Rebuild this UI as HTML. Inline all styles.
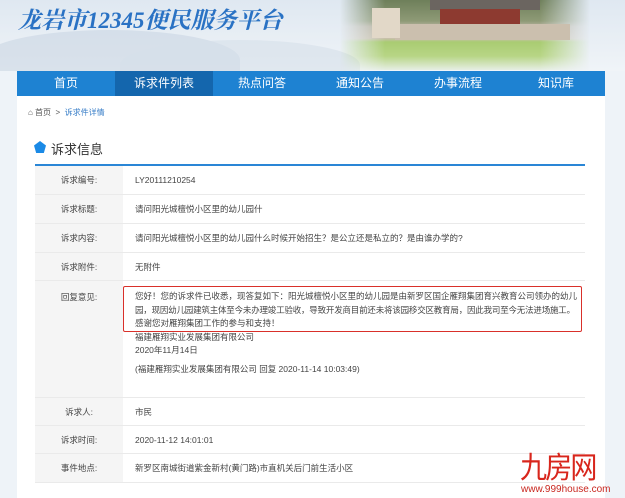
<!DOCTYPE html>
<html><head><meta charset="utf-8">
<style>
*{margin:0;padding:0;box-sizing:border-box}
body{width:625px;height:498px;overflow:hidden;background:#eef3f8;font-family:"Liberation Sans","Noto Sans CJK SC",sans-serif;position:relative}
.banner{position:absolute;left:0;top:0;width:625px;height:71px;background:linear-gradient(180deg,#dfe8f1 0%,#e9eff5 60%,#f0f4f8 100%);overflow:hidden}
.mt1{position:absolute;left:-20px;top:30px;width:260px;height:60px;background:#c9d6e2;border-radius:50% 50% 0 0;opacity:.6}
.mt2{position:absolute;left:120px;top:40px;width:240px;height:50px;background:#d5e0ea;border-radius:50% 50% 0 0;opacity:.6}
.title{position:absolute;left:18px;top:2px;font-family:"Liberation Serif","Noto Serif CJK SC",serif;font-weight:bold;font-size:23px;color:#2a72c4;font-style:italic}
.photo{position:absolute;left:340px;top:0;width:250px;height:70px;background:linear-gradient(180deg,#6e7f5a 0%,#8e9a76 30%,#b8b3a0 38%,#c8c0ab 55%,#a9cc72 60%,#b7d585 80%,#e6eee4 100%);-webkit-mask-image:linear-gradient(90deg,transparent 0,#000 18%,#000 80%,transparent 100%);mask-image:linear-gradient(90deg,transparent 0,#000 18%,#000 80%,transparent 100%)}
.roof{position:absolute;left:430px;top:0;width:110px;height:10px;background:#6b6560}
.hall{position:absolute;left:440px;top:9px;width:80px;height:15px;background:#8d3a30}
.wall{position:absolute;left:395px;top:24px;width:175px;height:16px;background:#cbbfae}
.house{position:absolute;left:372px;top:8px;width:28px;height:30px;background:#e2d8c8}
.nav{position:absolute;left:17px;top:71px;width:588px;height:25px;background:#1e82d2;display:flex}
.nav div{flex:1;color:#fff;font-size:12px;text-align:center;line-height:25px}
.nav .on{background:#1466ad}
.panel{position:absolute;left:17px;top:96px;width:588px;height:402px;background:#fff}
.crumb{position:absolute;left:28px;top:107px;font-size:8px;color:#555}
.crumb span{color:#3a7fc8}
.h{position:absolute;left:36px;top:139px;font-size:13px;color:#333}
.pent{position:absolute;left:34px;top:141px;width:12px;height:12px;background:#1a8ae6;clip-path:polygon(50% 0,100% 38%,82% 100%,18% 100%,0 38%)}
.h b{font-weight:normal;margin-left:15px}
.line{position:absolute;left:35px;top:164px;width:550px;height:2px;background:#2a86d6}
.row{position:absolute;left:35px;width:550px;border-bottom:1px solid #eaeaea;font-size:8.5px;color:#444}
.row .l{position:absolute;left:0;top:0;bottom:0;width:88px;background:#f5f5f5;text-align:center}
.row .v{position:absolute;left:100px;right:0}
.red{position:absolute;left:123px;top:286px;width:459px;height:46px;border:1.5px solid #d9302a;border-radius:2px}
.wm1{position:absolute;left:520px;top:452px;font-size:30px;color:#d8261c;letter-spacing:-2px;line-height:34px;transform:scaleX(.9);transform-origin:left}
.wm2{position:absolute;left:521px;top:484px;font-size:10px;color:#c9271f;line-height:12px}
</style></head><body>
<div class="banner"><div class="mt1"></div><div class="mt2"></div>
<div class="photo"></div><div class="roof"></div><div class="hall"></div><div class="wall"></div><div class="house"></div>
<div class="title">龙岩市12345便民服务平台</div></div>
<div class="nav"><div>首页</div><div class="on">诉求件列表</div><div>热点问答</div><div>通知公告</div><div>办事流程</div><div>知识库</div></div>
<div class="panel"></div>
<div class="crumb">⌂ 首页 &nbsp;&gt;&nbsp; <span>诉求件详情</span></div>
<div class="pent"></div>
<div class="h"><b>诉求信息</b></div>
<div class="line"></div>

<div class="row" style="top:166px;height:29px;line-height:29px"><div class="l">诉求编号:</div><div class="v">LY20111210254</div></div>
<div class="row" style="top:195px;height:29px;line-height:29px"><div class="l">诉求标题:</div><div class="v">请问阳光城檀悦小区里的幼儿园什</div></div>
<div class="row" style="top:224px;height:29px;line-height:29px"><div class="l">诉求内容:</div><div class="v">请问阳光城檀悦小区里的幼儿园什么时候开始招生？是公立还是私立的？是由谁办学的?</div></div>
<div class="row" style="top:253px;height:28px;line-height:28px"><div class="l">诉求附件:</div><div class="v">无附件</div></div>
<div class="row" style="top:281px;height:117px"><div class="l" style="padding-top:10px">回复意见:</div>
<div class="v" style="top:9px;line-height:13.5px;white-space:nowrap">您好！您的诉求件已收悉，现答复如下：阳光城檀悦小区里的幼儿园是由新罗区国企雁翔集团育兴教育公司领办的幼儿<br><span style="letter-spacing:-0.2px">园，现因幼儿园建筑主体至今未办理竣工验收，导致开发商目前还未将该园移交区教育局，因此我司至今无法进场施工。</span><br>感谢您对雁翔集团工作的参与和支持！<br>福建雁翔实业发展集团有限公司<br>2020年11月14日<br><span style="display:block;margin-top:5px">(福建雁翔实业发展集团有限公司 回复 2020-11-14 10:03:49)</span></div></div>
<div class="red"></div>
<div class="row" style="top:398px;height:28px;line-height:28px"><div class="l">诉求人:</div><div class="v">市民</div></div>
<div class="row" style="top:426px;height:28px;line-height:28px"><div class="l">诉求时间:</div><div class="v">2020-11-12 14:01:01</div></div>
<div class="row" style="top:454px;height:29px;line-height:29px"><div class="l">事件地点:</div><div class="v">新罗区南城街道紫金新村(黄门路)市直机关后门前生活小区</div></div>
<div class="wm1">九房网</div>
<div class="wm2">www.999house.com</div>
</body></html>
